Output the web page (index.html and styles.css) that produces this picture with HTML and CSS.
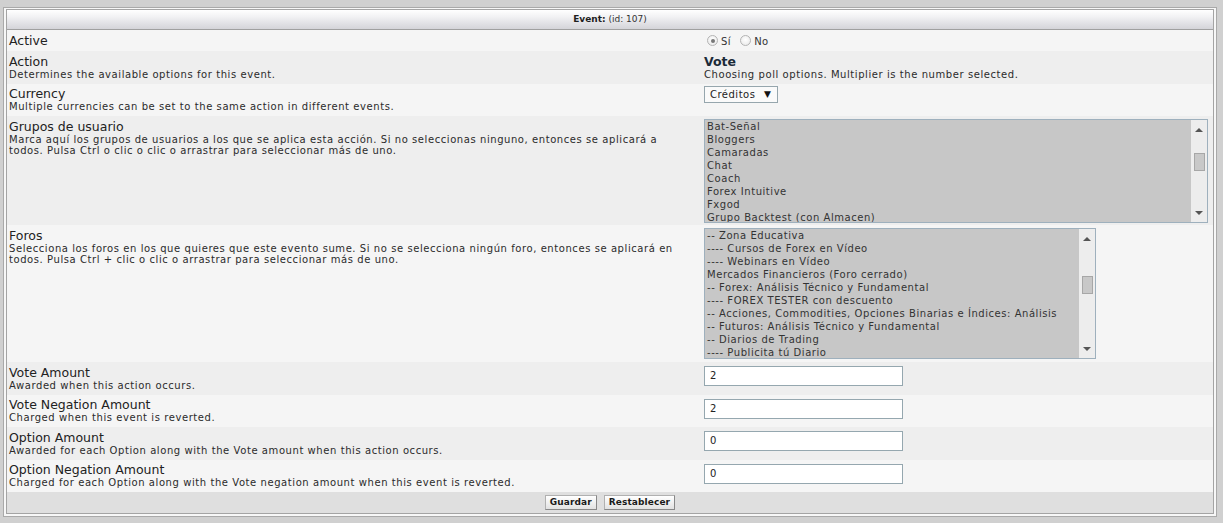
FILE: index.html
```html
<!DOCTYPE html>
<html lang="es">
<head>
<meta charset="utf-8">
<title>Event</title>
<link rel="stylesheet" href="styles.css">
</head>
<body>
<div class="outer">
  <div class="panel">
    <div class="head"><b>Event:</b> (id: 107)</div>

    <div class="row alt1 row-active">
      <div class="cell-l"><div class="label">Active</div></div>
      <div class="cell-r radios">
        <span class="radio checked"></span><span class="rtext">Sí</span>
        <span class="radio"></span><span class="rtext">No</span>
      </div>
    </div>

    <div class="row alt2">
      <div class="cell-l">
        <div class="label">Action</div>
        <div class="desc">Determines the available options for this event.</div>
      </div>
      <div class="cell-r">
        <div class="vote">Vote</div>
        <div class="desc">Choosing poll options. Multiplier is the number selected.</div>
      </div>
    </div>

    <div class="row alt1">
      <div class="cell-l">
        <div class="label">Currency</div>
        <div class="desc">Multiple currencies can be set to the same action in different events.</div>
      </div>
      <div class="cell-r">
        <div class="dropdown"><span>Créditos</span><span class="arrow">▼</span></div>
      </div>
    </div>

    <div class="row alt2">
      <div class="cell-l">
        <div class="label">Grupos de usuario</div>
        <div class="desc">Marca aquí los grupos de usuarios a los que se aplica esta acción. Si no seleccionas ninguno, entonces se aplicará a todos. Pulsa Ctrl o clic o clic o arrastrar para seleccionar más de uno.</div>
      </div>
      <div class="cell-r cell-groups">
        <div class="listbox groups">
          <div class="items">
            <div>Bat-Señal</div>
            <div>Bloggers</div>
            <div>Camaradas</div>
            <div>Chat</div>
            <div>Coach</div>
            <div>Forex Intuitive</div>
            <div>Fxgod</div>
            <div>Grupo Backtest (con Almacen)</div>
          </div>
          <div class="sbar">
            <span class="up"></span>
            <span class="thumb thumb-g"></span>
            <span class="down"></span>
          </div>
        </div>
      </div>
    </div>

    <div class="row alt1">
      <div class="cell-l">
        <div class="label">Foros</div>
        <div class="desc">Selecciona los foros en los que quieres que este evento sume. Si no se selecciona ningún foro, entonces se aplicará en todos. Pulsa Ctrl + clic o clic o arrastrar para seleccionar más de uno.</div>
      </div>
      <div class="cell-r">
        <div class="listbox forums">
          <div class="items">
            <div>-- Zona Educativa</div>
            <div>---- Cursos de Forex en Vídeo</div>
            <div>---- Webinars en Vídeo</div>
            <div>Mercados Financieros (Foro cerrado)</div>
            <div>-- Forex: Análisis Técnico y Fundamental</div>
            <div>---- FOREX TESTER con descuento</div>
            <div>-- Acciones, Commodities, Opciones Binarias e Índices: Análisis</div>
            <div>-- Futuros: Análisis Técnico y Fundamental</div>
            <div>-- Diarios de Trading</div>
            <div>---- Publicita tú Diario</div>
          </div>
          <div class="sbar">
            <span class="up"></span>
            <span class="thumb thumb-f"></span>
            <span class="down"></span>
          </div>
        </div>
      </div>
    </div>

    <div class="row alt2">
      <div class="cell-l">
        <div class="label">Vote Amount</div>
        <div class="desc">Awarded when this action occurs.</div>
      </div>
      <div class="cell-r"><div class="textbox">2</div></div>
    </div>

    <div class="row alt1">
      <div class="cell-l">
        <div class="label">Vote Negation Amount</div>
        <div class="desc">Charged when this event is reverted.</div>
      </div>
      <div class="cell-r"><div class="textbox">2</div></div>
    </div>

    <div class="row alt2">
      <div class="cell-l">
        <div class="label">Option Amount</div>
        <div class="desc">Awarded for each Option along with the Vote amount when this action occurs.</div>
      </div>
      <div class="cell-r"><div class="textbox">0</div></div>
    </div>

    <div class="row alt1">
      <div class="cell-l">
        <div class="label">Option Negation Amount</div>
        <div class="desc">Charged for each Option along with the Vote negation amount when this event is reverted.</div>
      </div>
      <div class="cell-r"><div class="textbox">0</div></div>
    </div>

    <div class="foot">
      <button class="btn" type="button">Guardar</button>
      <button class="btn" type="button">Restablecer</button>
    </div>
  </div>
</div>
</body>
</html>
```

FILE: styles.css
```css
html, body {
  margin: 0;
  padding: 0;
}
body {
  background: #d0d0d0;
  font-family: "DejaVu Sans", Verdana, sans-serif;
  color: #222;
  padding: 7px 6px 7px 3px;
  width: 1223px;
  height: 523px;
  box-sizing: border-box;
  overflow: hidden;
}
.outer {
  border: 1px solid #a9a9a9;
  background: #f7f7f7;
  padding: 1px 2px 2px 2px;
}
.panel {
  border: 1px solid #a4a4a4;
  background: #f5f5f5;
}
.head {
  height: 19px;
  line-height: 19px;
  text-align: center;
  font-size: 9px;
  color: #333;
  background: linear-gradient(#ffffff, #f2f2f4 35%, #d4d4d9);
  border-bottom: 1px solid #a0a0a0;
}
.head b {
  color: #1e1e1e;
}
.row {
  display: grid;
  grid-template-columns: 695px 1fr;
}
.alt1 { background: #f5f5f5; }
.alt2 { background: #eeeeee; }
.cell-l {
  padding: 3.5px 12px 3.5px 2px;
}
.cell-r {
  padding: 3px 2px 3px 2px;
}
.label {
  font-size: 12.5px;
  line-height: 14px;
  color: #222;
}
.desc {
  font-size: 10px;
  line-height: 11.5px;
  letter-spacing: 0.57px;
  color: #2b2b2b;
}
.row-active .cell-l {
  padding: 3px 2px 3px 2px;
}
.row-active .label {
  line-height: 15px;
}
.radios {
  display: flex;
  align-items: center;
  font-size: 10px;
  padding-left: 5px;
  padding-top: 5px;
  align-self: start;
}
.radio {
  width: 9px;
  height: 9px;
  border: 1px solid #b4b4b4;
  border-radius: 50%;
  background: radial-gradient(circle at 50% 40%, #ffffff, #e6e6e6);
  box-sizing: content-box;
  position: relative;
}
.radio.checked::after {
  content: "";
  position: absolute;
  left: 2.5px;
  top: 2.5px;
  width: 4px;
  height: 4px;
  border-radius: 50%;
  background: #777;
}
.rtext {
  margin-left: 3px;
  margin-right: 9px;
  color: #333;
  letter-spacing: 0.5px;
  position: relative;
  top: 1px;
}
.vote {
  font-size: 12.5px;
  font-weight: bold;
  line-height: 14px;
  color: #1b2a38;
  margin-top: 0.5px;
}
.dropdown {
  display: flex;
  align-items: center;
  justify-content: space-between;
  width: 61px;
  height: 15px;
  border: 1px solid #96a6ad;
  background: #fafafa;
  font-size: 10px;
  letter-spacing: 0.5px;
  color: #222;
  padding: 0 6px 0 5px;
  box-sizing: content-box;
  margin-top: -1px;
}
.dropdown .arrow {
  font-size: 9px;
  letter-spacing: 0;
  color: #111;
}
.listbox {
  display: flex;
  border: 1px solid #9eb0bd;
  background: #c7c7c7;
  box-sizing: border-box;
  overflow: hidden;
}
.cell-groups {
  padding-bottom: 2px;
}
.groups {
  width: 504px;
  height: 104px;
}
.forums {
  width: 392px;
  height: 131px;
}
.items {
  flex: 1;
  padding: 0 2px;
  font-size: 10px;
  line-height: 13px;
  letter-spacing: 0.55px;
  color: #333;
  white-space: nowrap;
  overflow: hidden;
}
.sbar {
  width: 16px;
  flex: none;
  background: #ededed;
  display: flex;
  flex-direction: column;
  align-items: center;
}
.up, .down {
  width: 0;
  height: 0;
  border-left: 4px solid transparent;
  border-right: 4px solid transparent;
}
.up {
  border-bottom: 4px solid #555;
  margin-top: 8px;
}
.down {
  border-top: 4px solid #555;
  margin-top: auto;
  margin-bottom: 7px;
}
.thumb {
  width: 11px;
  height: 18px;
  background: #c8c8c8;
  border: 1px solid #a7a7a7;
  box-sizing: border-box;
}
.thumb-g { margin-top: 21px; }
.thumb-f { margin-top: 35px; }
.textbox {
  width: 199px;
  height: 20px;
  border: 1px solid #95a7af;
  background: #fff;
  box-sizing: border-box;
  font-size: 10px;
  line-height: 18px;
  padding-left: 5px;
  color: #222;
  margin-top: 1px;
}
.foot {
  background: #dfdfdf;
  height: 21px;
  display: flex;
  justify-content: center;
  align-items: center;
  gap: 7px;
}
.btn {
  font-family: "DejaVu Sans", Verdana, sans-serif;
  font-size: 9px;
  font-weight: bold;
  letter-spacing: 0.1px;
  color: #1a1a1a;
  height: 15px;
  padding: 0 4px;
  line-height: 13px;
  background: linear-gradient(#ffffff, #e2e2e2);
  border: 1px solid #b0b0b0;
  border-right-color: #888;
  border-bottom-color: #888;
  border-radius: 0;
}
```
